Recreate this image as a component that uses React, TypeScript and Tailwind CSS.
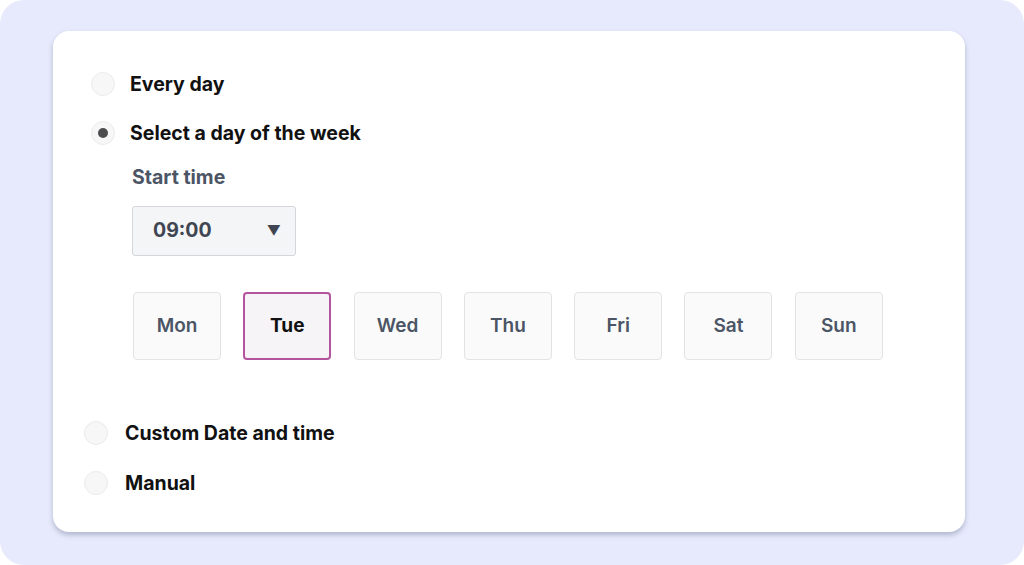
import React from "react";

const days = ["Mon", "Tue", "Wed", "Thu", "Fri", "Sat", "Sun"];

function Radio({ checked }: { checked?: boolean }) {
  return (
    <span className="flex h-[24px] w-[24px] shrink-0 items-center justify-center rounded-full border border-[#ebebeb] bg-[#f7f7f7]">
      {checked && <span className="h-[10px] w-[10px] rounded-full bg-[#4d4d4f]" />}
    </span>
  );
}

export default function App() {
  return (
    <div
      className="h-[565px] w-[1024px] overflow-hidden rounded-[24px] bg-[#e7eafc] pt-[31px]"
      style={{ fontFamily: "Inter, 'Noto Sans', sans-serif" }}
    >
      <div className="ml-[53px] h-[501px] w-[912px] rounded-[16px] bg-white pl-[38px] pt-[41px] shadow-[0_3px_5px_rgba(80,90,120,0.35)]">
        <div className="flex items-center gap-[15px]">
          <Radio />
          <span className="text-[19.5px] font-bold leading-[24px] text-[#111]">Every day</span>
        </div>
        <div className="mt-[25px] flex items-center gap-[15px]">
          <Radio checked />
          <span className="text-[19.5px] font-bold leading-[24px] text-[#111]">Select a day of the week</span>
        </div>
        <div className="ml-[41px] mt-[20px] text-[19.5px] font-bold leading-[24px] text-[#4b5565]">Start time</div>
        <div className="ml-[41px] mt-[17px] flex h-[50px] w-[164px] items-center justify-between rounded-[3px] border border-[#d4d6da] bg-[#f4f5f7] pl-[20px] pr-[14px]">
          <span className="text-[19.5px] font-bold text-[#3f4652]">09:00</span>
          <span className="text-[14px] leading-none text-[#3f4652]">▼</span>
        </div>
        <div className="ml-[42px] mt-[36px] flex gap-[22.3px]">
          {days.map((d) =>
            d === "Tue" ? (
              <div
                key={d}
                className="flex h-[68px] w-[88px] items-center justify-center rounded-[4px] border-2 border-[#b4549f] bg-[#f6f4f6] text-[19px] font-bold text-[#111]"
              >
                {d}
              </div>
            ) : (
              <div
                key={d}
                className="flex h-[68px] w-[88px] items-center justify-center rounded-[4px] border border-[#e3e3e5] bg-[#fafafa] text-[19px] font-semibold text-[#4b5565]"
              >
                {d}
              </div>
            )
          )}
        </div>
        <div className="-ml-[7px] mt-[61px] flex items-center gap-[17px]">
          <Radio />
          <span className="text-[19.5px] font-bold leading-[24px] text-[#111]">Custom Date and time</span>
        </div>
        <div className="-ml-[7px] mt-[26px] flex items-center gap-[17px]">
          <Radio />
          <span className="text-[19.5px] font-bold leading-[24px] text-[#111]">Manual</span>
        </div>
      </div>
    </div>
  );
}
